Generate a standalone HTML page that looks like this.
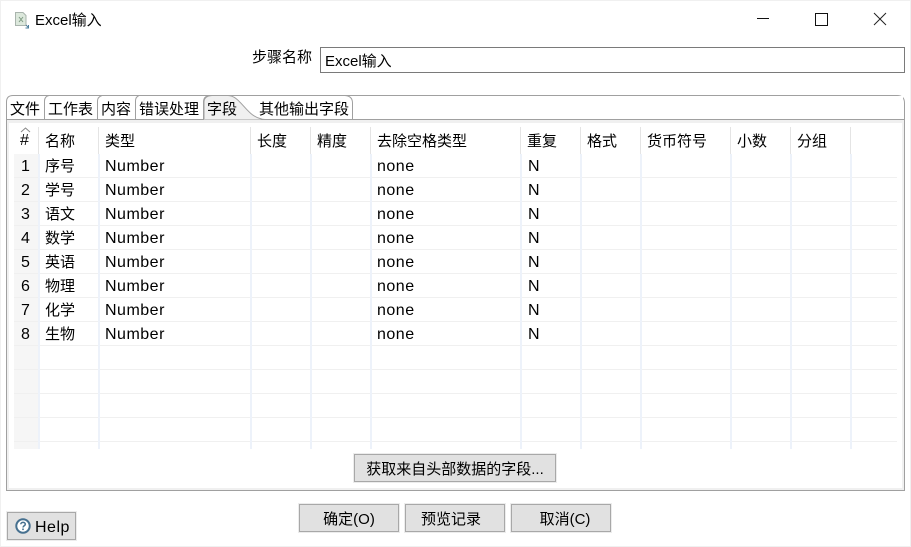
<!DOCTYPE html>
<html><head><meta charset="utf-8">
<style>
html,body{margin:0;padding:0;background:#fff}
#w{position:relative;width:911px;height:547px;overflow:hidden;background:#fff;font:15px/20px "Liberation Sans","Noto Sans CJK SC",sans-serif;color:#000}
#w div,#w span{position:absolute;white-space:nowrap}
.l{background:#f0f0f0;height:1px;left:14px;width:883px}
.v{background:#edf2fa;width:2px;top:154px;height:295px}
.h{background:#e4e4e4;width:1px;top:127px;height:27px}
.b{background:#e1e1e1;border:1px solid #a8a8a8;outline:1px solid #ececec;box-sizing:border-box;text-align:center;line-height:29px}
.n{letter-spacing:.5px;font-size:16px}
</style></head><body><div id="w">
<div style="left:0;top:0;width:911px;height:1px;background:#f0f0f0"></div>
<div style="left:0;top:0;width:1px;height:547px;background:#f0f0f0"></div>
<div style="left:910px;top:0;width:1px;height:547px;background:#f0f0f0"></div>
<div style="left:0;top:546px;width:911px;height:1px;background:#f0f0f0"></div>

<svg style="position:absolute;left:14px;top:11px" width="16" height="18" viewBox="0 0 16 18"><path d="M1.500 1.500H9L12 4.500V14.500H1.500Z" fill="#dce8dc" stroke="#a9b4ad"/><path d="M5 6l4 5M9 6l-4 5" stroke="#7d9a82" fill="none"/><path d="M12 14l2.500 2.500M14.500 14v3h-3" stroke="#4d7f9c" fill="none"/></svg>
<span style="left:35px;top:11px;font-size:15px">Excel输入</span>

<div style="left:757px;top:18px;width:12px;height:1px;background:#111"></div>
<div style="left:815px;top:13px;width:11px;height:11px;border:1px solid #111"></div>
<svg style="position:absolute;left:873px;top:12px" width="14" height="14"><path d="M1 1L13 13M13 1L1 13" stroke="#222" fill="none"/></svg>

<span style="left:252px;top:48px">步骤名称</span>
<div style="left:320px;top:47px;width:585px;height:26px;border:1px solid #7a7a7a;box-sizing:border-box"></div>
<span style="left:325px;top:52px">Excel输入</span>

<!-- folder -->
<svg style="position:absolute;left:0;top:90px" width="911" height="405">
<path d="M6.500 30V12Q6.500 5.500 13 5.500H897Q904.500 5.500 904.500 13V400.500H6.500Z" fill="#fff" stroke="#a0a0a0"/>
<rect x="7" y="30" width="897" height="3" fill="#f0f0f0"/>
<rect x="7" y="30" width="2" height="370" fill="#f0f0f0"/><rect x="902" y="30" width="2" height="370" fill="#f0f0f0"/>
<rect x="7" y="398" width="897" height="2" fill="#f0f0f0"/>
<path d="M6.500 29.500H904.500" stroke="#a0a0a0" fill="none"/>
<path d="M44.500 29V11Q44.500 6.500 49 5.500M97.500 29V11Q97.500 7 102 5.500M135.500 29V11Q135.500 7 139 5.500M203.500 29V11Q204 7 208 5.500" stroke="#a0a0a0" fill="none"/>
<path d="M204 29.500V12Q204 6 212 5.500H228C240 5.500 246 25 260 28.500Q262 29.500 265 29.500Z" fill="#f0f0f0" stroke="none"/>
<path d="M204 29V12Q204 6 212 5.500H228C240 5.500 246 25 260 28.500Q262 29.500 265 29.500" fill="none" stroke="#a0a0a0"/>
<path d="M352.500 29.500V13Q352.500 6 345 5.500" fill="#fff" stroke="#a0a0a0"/>
<rect x="354" y="6" width="549" height="23" fill="#fff"/>
</svg>
<span style="left:10px;top:100px">文件</span>
<span style="left:48px;top:100px">工作表</span>
<span style="left:101px;top:100px">内容</span>
<span style="left:139px;top:100px">错误处理</span>
<span style="left:207px;top:100px">字段</span>
<span style="left:259px;top:100px">其他输出字段</span>

<!-- table -->
<div style="left:14px;top:154px;width:24px;height:295px;background:#f6f6f6"></div>
<div class="l" style="top:177px"></div><div class="l" style="top:201px"></div><div class="l" style="top:225px"></div><div class="l" style="top:249px"></div><div class="l" style="top:273px"></div><div class="l" style="top:297px"></div><div class="l" style="top:321px"></div><div class="l" style="top:345px"></div><div class="l" style="top:369px"></div><div class="l" style="top:393px"></div><div class="l" style="top:417px"></div><div class="l" style="top:441px"></div>
<div class="h" style="left:38px"></div><div class="h" style="left:98px"></div><div class="h" style="left:250px"></div><div class="h" style="left:310px"></div><div class="h" style="left:370px"></div><div class="h" style="left:520px"></div><div class="h" style="left:580px"></div><div class="h" style="left:640px"></div><div class="h" style="left:730px"></div><div class="h" style="left:790px"></div><div class="h" style="left:850px"></div>
<div class="v" style="left:38px"></div><div class="v" style="left:98px"></div><div class="v" style="left:250px"></div><div class="v" style="left:310px"></div><div class="v" style="left:370px"></div><div class="v" style="left:520px"></div><div class="v" style="left:580px"></div><div class="v" style="left:640px"></div><div class="v" style="left:730px"></div><div class="v" style="left:790px"></div><div class="v" style="left:850px"></div>

<svg style="position:absolute;left:20px;top:127px" width="12" height="6"><path d="M1 5L5.500 1L10 5" stroke="#888" fill="none"/></svg>
<span style="left:20px;top:131px;font-size:16px">#</span>
<span style="left:45px;top:132px">名称</span>
<span style="left:105px;top:132px">类型</span>
<span style="left:257px;top:132px">长度</span>
<span style="left:317px;top:132px">精度</span>
<span style="left:377px;top:132px">去除空格类型</span>
<span style="left:527px;top:132px">重复</span>
<span style="left:587px;top:132px">格式</span>
<span style="left:647px;top:132px">货币符号</span>
<span style="left:737px;top:132px">小数</span>
<span style="left:797px;top:132px">分组</span>

<span class="n" style="left:21px;top:157px">1</span><span style="left:45px;top:157px">序号</span><span class="n" style="left:105px;top:157px">Number</span><span class="n" style="left:377px;top:157px">none</span><span class="n" style="left:528px;top:157px">N</span>
<span class="n" style="left:21px;top:181px">2</span><span style="left:45px;top:181px">学号</span><span class="n" style="left:105px;top:181px">Number</span><span class="n" style="left:377px;top:181px">none</span><span class="n" style="left:528px;top:181px">N</span>
<span class="n" style="left:21px;top:205px">3</span><span style="left:45px;top:205px">语文</span><span class="n" style="left:105px;top:205px">Number</span><span class="n" style="left:377px;top:205px">none</span><span class="n" style="left:528px;top:205px">N</span>
<span class="n" style="left:21px;top:229px">4</span><span style="left:45px;top:229px">数学</span><span class="n" style="left:105px;top:229px">Number</span><span class="n" style="left:377px;top:229px">none</span><span class="n" style="left:528px;top:229px">N</span>
<span class="n" style="left:21px;top:253px">5</span><span style="left:45px;top:253px">英语</span><span class="n" style="left:105px;top:253px">Number</span><span class="n" style="left:377px;top:253px">none</span><span class="n" style="left:528px;top:253px">N</span>
<span class="n" style="left:21px;top:277px">6</span><span style="left:45px;top:277px">物理</span><span class="n" style="left:105px;top:277px">Number</span><span class="n" style="left:377px;top:277px">none</span><span class="n" style="left:528px;top:277px">N</span>
<span class="n" style="left:21px;top:301px">7</span><span style="left:45px;top:301px">化学</span><span class="n" style="left:105px;top:301px">Number</span><span class="n" style="left:377px;top:301px">none</span><span class="n" style="left:528px;top:301px">N</span>
<span class="n" style="left:21px;top:325px">8</span><span style="left:45px;top:325px">生物</span><span class="n" style="left:105px;top:325px">Number</span><span class="n" style="left:377px;top:325px">none</span><span class="n" style="left:528px;top:325px">N</span>

<!-- buttons -->
<div class="b" style="left:354px;top:454px;width:202px;height:28px">获取来自头部数据的字段...</div>
<div class="b" style="left:299px;top:504px;width:100px;height:28px">确定(O)</div>
<div class="b" style="left:405px;top:504px;width:100px;height:28px;padding-right:8px">预览记录</div>
<div class="b" style="left:511px;top:504px;width:100px;height:28px;padding-left:8px">取消(C)</div>
<div class="b" style="left:7px;top:512px;width:69px;height:28px"></div>
<svg style="position:absolute;left:15px;top:518px" width="17" height="17"><circle cx="8" cy="8" r="6.700" fill="#fff" stroke="#46708f" stroke-width="2"/><path d="M5.800 6.300C5.800 3.800 10.300 3.800 10.300 6.300C10.300 7.800 8 7.800 8 9.500" fill="none" stroke="#46708f" stroke-width="1.500"/><rect x="7.200" y="10.500" width="1.600" height="1.600" fill="#46708f"/></svg>
<span class="n" style="left:35px;top:518px">Help</span>
</div></body></html>
